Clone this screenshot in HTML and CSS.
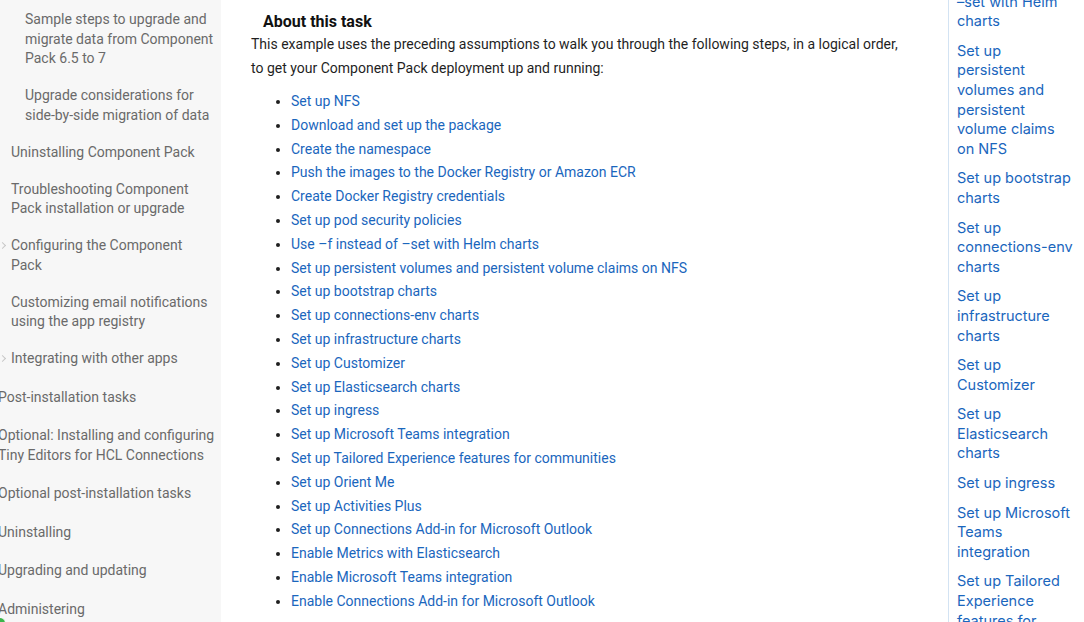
FILE: index.html
```html
<!DOCTYPE html>
<html lang="en">
<head>
<meta charset="utf-8">
<title>About this task</title>
<link rel="stylesheet" href="styles.css">
</head>
<body>
<div class="page">
  <nav class="sidebar">
    <ul class="nav">
      <li class="lvl3">Sample steps to upgrade and migrate data from Component Pack 6.5 to 7</li>
      <li class="lvl3">Upgrade considerations for side-by-side migration of data</li>
      <li class="lvl2">Uninstalling Component Pack</li>
      <li class="lvl2">Troubleshooting Component Pack installation or upgrade</li>
      <li class="lvl2 has-children">Configuring the Component Pack</li>
      <li class="lvl2">Customizing email notifications using the app registry</li>
      <li class="lvl2 has-children">Integrating with other apps</li>
      <li class="lvl1">Post-installation tasks</li>
      <li class="lvl1">Optional: Installing and configuring Tiny Editors for HCL Connections</li>
      <li class="lvl1">Optional post-installation tasks</li>
      <li class="lvl1">Uninstalling</li>
      <li class="lvl1">Upgrading and updating</li>
      <li class="lvl1">Administering</li>
    </ul>
    <span class="fab"></span>
  </nav>

  <main class="main">
    <h2 class="task-title">About this task</h2>
    <p class="intro">This example uses the preceding assumptions to walk you through the following steps, in a logical order, to get your Component Pack deployment up and running:</p>
    <ul class="steps">
      <li><a href="#">Set up NFS</a></li>
      <li><a href="#">Download and set up the package</a></li>
      <li><a href="#">Create the namespace</a></li>
      <li><a href="#">Push the images to the Docker Registry or Amazon ECR</a></li>
      <li><a href="#">Create Docker Registry credentials</a></li>
      <li><a href="#">Set up pod security policies</a></li>
      <li><a href="#">Use –f instead of –set with Helm charts</a></li>
      <li><a href="#">Set up persistent volumes and persistent volume claims on NFS</a></li>
      <li><a href="#">Set up bootstrap charts</a></li>
      <li><a href="#">Set up connections-env charts</a></li>
      <li><a href="#">Set up infrastructure charts</a></li>
      <li><a href="#">Set up Customizer</a></li>
      <li><a href="#">Set up Elasticsearch charts</a></li>
      <li><a href="#">Set up ingress</a></li>
      <li><a href="#">Set up Microsoft Teams integration</a></li>
      <li><a href="#">Set up Tailored Experience features for communities</a></li>
      <li><a href="#">Set up Orient Me</a></li>
      <li><a href="#">Set up Activities Plus</a></li>
      <li><a href="#">Set up Connections Add-in for Microsoft Outlook</a></li>
      <li><a href="#">Enable Metrics with Elasticsearch</a></li>
      <li><a href="#">Enable Microsoft Teams integration</a></li>
      <li><a href="#">Enable Connections Add-in for Microsoft Outlook</a></li>
    </ul>
  </main>

  <aside class="toc">
    <ul class="toc-list">
      <li><a href="#"><span class="nobr">Use –f instead of</span> –set with Helm charts</a></li>
      <li><a href="#">Set up persistent volumes and persistent volume claims on NFS</a></li>
      <li><a href="#">Set up bootstrap charts</a></li>
      <li><a href="#">Set up <span class="nobr">connections-env</span> charts</a></li>
      <li><a href="#">Set up infrastructure charts</a></li>
      <li><a href="#">Set up Customizer</a></li>
      <li><a href="#">Set up Elasticsearch charts</a></li>
      <li><a href="#">Set up ingress</a></li>
      <li><a href="#">Set up Microsoft Teams integration</a></li>
      <li><a href="#">Set up Tailored Experience features for communities</a></li>
    </ul>
  </aside>
</div>
</body>
</html>
```

FILE: styles.css
```css
html, body {
  margin: 0;
  padding: 0;
  background: #ffffff;
}

.page {
  display: flex;
  width: 1084px;
  height: 622px;
  overflow: hidden;
  font-family: Roboto, "Liberation Sans", sans-serif;
}

/* Left navigation */
.sidebar {
  position: relative;
  flex: 0 0 221px;
  background: #f7f7f7;
  overflow: hidden;
}

.nav {
  list-style: none;
  margin: 0;
  padding: 10px 0 0 0;
  display: flex;
  flex-direction: column;
  gap: 17.5px;
  font-size: 14px;
  line-height: 19.5px;
  color: #6a6a6a;
}

.nav li {
  position: relative;
  padding-right: 6px;
}

.lvl3 { padding-left: 25px; }
.lvl2 { padding-left: 11px; }
.lvl1 { padding-left: 0; margin: 1.5px 0 0 -2px; }

.has-children::before {
  content: "";
  position: absolute;
  left: 0;
  top: 7px;
  width: 4px;
  height: 4px;
  border-right: 1px solid #c8c8c8;
  border-top: 1px solid #c8c8c8;
  transform: rotate(45deg);
}

.fab {
  position: absolute;
  left: -6px;
  bottom: -7px;
  width: 10px;
  height: 10px;
  border-radius: 50%;
  background: #3bb54a;
  border: 1px solid #ffffff;
}

/* Main content */
.main {
  flex: 1 1 auto;
  padding: 12px 45px 0 30px;
  color: #1f1f1f;
}

.task-title {
  margin: 0 0 0 12px;
  font-size: 16px;
  line-height: 20px;
  font-weight: 700;
  color: #111111;
}

.intro {
  margin: 0;
  font-size: 14px;
  line-height: 24px;
}

.steps {
  margin: 10px 0 0 0;
  padding-left: 40px;
  font-size: 14px;
  line-height: 23.8px;
}

.steps a,
.toc a {
  color: #1a66bd;
  text-decoration: none;
}

/* Right table of contents */
.toc {
  flex: 0 0 115.5px;
  border-left: 1px solid #d3e3f3;
  padding: 0 11.5px 0 8px;
  overflow: hidden;
}

.toc-list {
  list-style: none;
  margin: -28px 0 0 0;
  padding: 0;
  display: flex;
  flex-direction: column;
  gap: 10px;
  font-family: Inter, "DejaVu Sans", sans-serif;
  font-size: 14.5px;
  line-height: 19.6px;
}

.nobr {
  white-space: nowrap;
}
```
